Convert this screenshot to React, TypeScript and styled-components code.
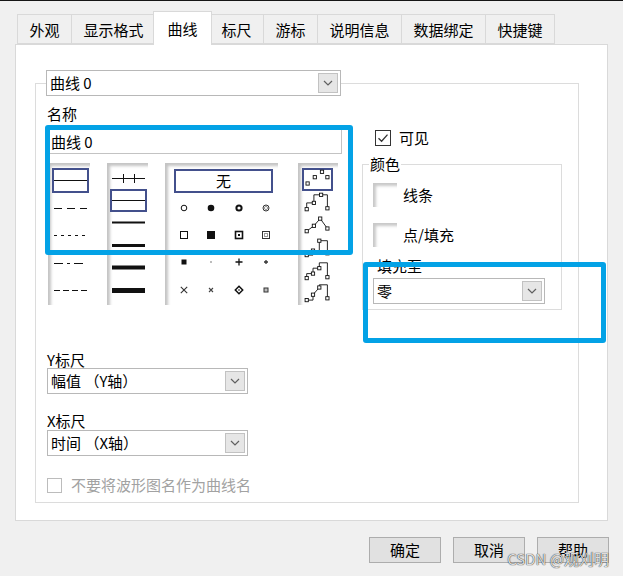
import React from 'react';
import styled, { createGlobalStyle } from 'styled-components';

const GlobalStyle = createGlobalStyle`
  html, body {
    margin: 0;
    padding: 0;
    background: #f0f0f0;
  }
  body {
    font-family: "Noto Sans CJK SC", "Noto Sans", sans-serif;
    font-size: 15px;
    color: #000;
  }
`;

const tabs = ['外观', '显示格式', '曲线', '标尺', '游标', '说明信息', '数据绑定', '快捷键'];

const Window = styled.div`
  position: relative;
  width: 623px;
  height: 576px;
  box-sizing: border-box;
  border-top: 1px solid #151515;
  background: #f0f0f0;
  display: flex;
  flex-direction: column;
  overflow: hidden;
`;

const TabBar = styled.div`
  display: flex;
  align-items: flex-end;
  height: 43px;
  padding-left: 17px;
  position: relative;
  z-index: 2;
`;

const Tab = styled.div<{ $active?: boolean }>`
  box-sizing: border-box;
  display: flex;
  align-items: center;
  height: ${(p) => (p.$active ? '34px' : '30px')};
  padding: 0 ${(p) => (p.$active ? '13.5px' : '11.5px')};
  margin: 0 ${(p) => (p.$active ? '-2px' : '0')} ${(p) => (p.$active ? '-1px' : '0')}
    ${(p) => (p.$active ? '-3px' : '-1px')};
  border: 1px solid #d9d9d9;
  border-bottom: ${(p) => (p.$active ? 'none' : '1px solid #d9d9d9')};
  background: ${(p) => (p.$active ? '#fff' : '#f0f0f0')};
  position: relative;
  z-index: ${(p) => (p.$active ? 2 : 1)};
  white-space: nowrap;
  &:first-child {
    margin-left: 0;
  }
`;

const Panel = styled.div`
  box-sizing: border-box;
  height: 477px;
  margin: 0 15px;
  padding: 25px 28px 0 19px;
  background: #fff;
  border: 1px solid #d9d9d9;
  position: relative;
  z-index: 1;
`;

const Group = styled.fieldset`
  margin: 0;
  padding: 9px 11px 6px 11px;
  border: 1px solid #dcdcdc;
  min-width: 0;
`;

const GroupLegend = styled.legend`
  padding: 0;
  margin-left: -1px;
`;

const TopArea = styled.div`
  display: grid;
  grid-template-columns: 295px 200px;
  column-gap: 20px;
  align-items: start;
`;

const Column = styled.div`
  display: flex;
  flex-direction: column;
`;

const Label = styled.div<{ $gap?: number; $indent?: number }>`
  line-height: 18px;
  height: 18px;
  margin-bottom: ${(p) => p.$gap ?? 0}px;
  margin-left: ${(p) => p.$indent ?? 0}px;
  white-space: nowrap;
`;

const NameInput = styled.div`
  box-sizing: border-box;
  height: 25px;
  display: flex;
  align-items: center;
  padding-left: 3px;
  border: 1px solid #c3c3c3;
  background: #fff;
`;

const Combo = styled.div<{ $w: number; $h?: number }>`
  box-sizing: border-box;
  width: ${(p) => p.$w}px;
  height: ${(p) => p.$h ?? 26}px;
  display: flex;
  align-items: center;
  padding: 0 2px 0 3px;
  background: #fff;
  border: 1px solid #b8b8b8;
  white-space: nowrap;
`;

const ComboText = styled.span`
  flex: 1;
  line-height: 18px;
`;

/* full-width brackets centred in their em box, as the dialog font draws them */
const Paren = styled.span`
  font-family: "Noto Sans CJK TC", "Noto Sans CJK SC", sans-serif;
`;

const ComboButton = styled.span`
  box-sizing: border-box;
  width: 20px;
  height: calc(100% - 4px);
  display: flex;
  align-items: center;
  justify-content: center;
  background: #e6e6e6;
  border: 1px solid #c2c2c2;
`;

const ListRow = styled.div`
  display: flex;
  align-items: flex-start;
  margin-top: 9px;
  height: 142px;
`;

const ListBox = styled.div<{ $w: number; $left: number; $pad: string }>`
  box-sizing: border-box;
  width: ${(p) => p.$w}px;
  height: 142px;
  margin-left: ${(p) => p.$left}px;
  padding: ${(p) => p.$pad};
  flex-shrink: 0;
  background: #fff;
  box-shadow: inset 3px 3px 3px #c4c4c4;
  display: flex;
  flex-direction: column;
`;

const ListItem = styled.div<{ $w: number; $h: number; $selected?: boolean }>`
  box-sizing: border-box;
  width: ${(p) => p.$w}px;
  height: ${(p) => p.$h}px;
  flex-shrink: 0;
  display: flex;
  align-items: center;
  justify-content: center;
  border: 2px solid ${(p) => (p.$selected ? '#43508c' : 'transparent')};
`;

const NoneBox = styled.div`
  box-sizing: border-box;
  width: 99px;
  height: 24px;
  display: flex;
  align-items: center;
  justify-content: center;
  border: 2px solid #43508c;
  line-height: 18px;
`;

const PointGrid = styled.div`
  display: grid;
  grid-template-columns: repeat(4, 27.5px);
  grid-auto-rows: 27.3px;
  margin: 1px 0 0 -4px;
  & > span {
    display: flex;
    align-items: center;
    justify-content: center;
  }
`;

const CheckRow = styled.label<{ $top?: number; $gap?: number; $muted?: boolean }>`
  display: flex;
  align-items: center;
  gap: ${(p) => p.$gap ?? 8}px;
  height: ${(p) => (p.$muted ? 22 : 20)}px;
  margin-top: ${(p) => p.$top ?? 0}px;
  margin-left: ${(p) => (p.$muted ? 0 : 13)}px;
  color: ${(p) => (p.$muted ? '#a2a2a2' : '#000')};
  line-height: 18px;
  white-space: nowrap;
`;

const CheckBox = styled.span<{ $muted?: boolean }>`
  box-sizing: border-box;
  width: ${(p) => (p.$muted ? 15 : 16)}px;
  height: ${(p) => (p.$muted ? 15 : 16)}px;
  border: 1px solid ${(p) => (p.$muted ? '#bcbcbc' : '#333')};
  background: #fff;
  display: flex;
  align-items: center;
  justify-content: center;
`;

const ColorGroup = styled.fieldset`
  margin: 6px 0 0 0;
  padding: 9px 10px 5px 10px;
  border: 1px solid #dcdcdc;
  min-width: 0;
`;

const ColorLegend = styled.legend`
  padding: 0 1px;
  margin-left: -4px;
  line-height: 20px;
`;

const SwatchRow = styled.div<{ $top?: number }>`
  display: flex;
  align-items: center;
  gap: 6px;
  height: 24px;
  margin-top: ${(p) => p.$top ?? 0}px;
  line-height: 18px;
`;

const Swatch = styled.span`
  box-sizing: border-box;
  width: 24px;
  height: 24px;
  background: #fff;
  box-shadow: inset 3px 3px 3px #c9c9c9;
`;

const BottomArea = styled.div`
  display: flex;
  flex-direction: column;
  margin-top: 41px;
`;

const Footer = styled.div`
  display: flex;
  justify-content: flex-end;
  gap: 12px;
  margin-top: 16px;
  padding-right: 14px;
`;

const Button = styled.button`
  box-sizing: border-box;
  width: 72px;
  height: 26px;
  padding: 0;
  font: inherit;
  line-height: 18px;
  color: #000;
  background: #e1e1e1;
  border: 1px solid #adadad;
`;

const Highlight = styled.div<{ $x: number; $y: number; $w: number; $h: number }>`
  position: absolute;
  left: ${(p) => p.$x}px;
  top: ${(p) => p.$y}px;
  width: ${(p) => p.$w}px;
  height: ${(p) => p.$h}px;
  box-sizing: border-box;
  border: 5px solid #03a2e6;
  border-radius: 3px;
  z-index: 5;
  pointer-events: none;
`;

const Watermark = styled.div`
  position: absolute;
  right: 14px;
  bottom: 8px;
  z-index: 6;
  font-size: 15px;
  line-height: 18px;
  color: rgba(255, 255, 255, 0.85);
  text-shadow: 0 0 1px rgba(0, 0, 0, 0.7), 0 0 1px rgba(0, 0, 0, 0.7);
  white-space: nowrap;
`;

const Chevron = () => (
  <svg width="10" height="6" viewBox="0 0 10 6">
    <path d="M1 1 L5 5 L9 1" fill="none" stroke="#606060" strokeWidth="1.2" />
  </svg>
);

const Dropdown = ({ text, w, h }: { text: React.ReactNode; w: number; h?: number }) => (
  <Combo $w={w} $h={h}>
    <ComboText>{text}</ComboText>
    <ComboButton>
      <Chevron />
    </ComboButton>
  </Combo>
);

const LineSample = ({ dash, width = 1 }: { dash?: string; width?: number }) => (
  <svg width="33" height="7" viewBox="0 0 33 7">
    <line x1="0" y1="3.5" x2="33" y2="3.5" stroke="#111" strokeWidth={width} strokeDasharray={dash} />
  </svg>
);

const CrossLine = () => (
  <svg width="33" height="11" viewBox="0 0 33 11">
    <line x1="0" y1="5.5" x2="33" y2="5.5" stroke="#111" strokeWidth="1" />
    <line x1="11.5" y1="1" x2="11.5" y2="10" stroke="#111" strokeWidth="1" />
    <line x1="22.5" y1="1" x2="22.5" y2="10" stroke="#111" strokeWidth="1" />
  </svg>
);

const pointKinds = [
  'ring', 'dot', 'boldring', 'dblring',
  'square', 'fillsq', 'dotsq', 'dblsq',
  'smallsq', 'pixel', 'plus', 'smallplus',
  'cross', 'smallcross', 'diamond', 'tinysq',
];

const PointSymbol = ({ kind }: { kind: string }) => {
  const s = '#111';
  let body: React.ReactNode = null;
  switch (kind) {
    case 'ring':
      body = <circle cx="5" cy="5" r="2.8" fill="#fff" stroke={s} strokeWidth="1" />;
      break;
    case 'dot':
      body = <circle cx="5" cy="5" r="3.3" fill={s} />;
      break;
    case 'boldring':
      body = <circle cx="5" cy="5" r="2.6" fill="#fff" stroke={s} strokeWidth="2" />;
      break;
    case 'dblring':
      body = (
        <>
          <circle cx="5" cy="5" r="3" fill="#fff" stroke="#333" strokeWidth="1" />
          <circle cx="5" cy="5" r="1.6" fill="#fff" stroke="#999" strokeWidth="1" />
        </>
      );
      break;
    case 'square':
      body = <rect x="1.5" y="1.5" width="7" height="7" fill="#fff" stroke={s} strokeWidth="1" />;
      break;
    case 'fillsq':
      body = <rect x="1" y="1" width="8" height="8" fill={s} />;
      break;
    case 'dotsq':
      body = (
        <>
          <rect x="1.5" y="1.5" width="7" height="7" fill="#fff" stroke={s} strokeWidth="1.6" />
          <rect x="4" y="4" width="2" height="2" fill={s} />
        </>
      );
      break;
    case 'dblsq':
      body = (
        <>
          <rect x="1.5" y="1.5" width="7" height="7" fill="#fff" stroke="#333" strokeWidth="1" />
          <rect x="3.5" y="3.5" width="3" height="3" fill="#fff" stroke="#999" strokeWidth="1" />
        </>
      );
      break;
    case 'smallsq':
      body = <rect x="2.5" y="2.5" width="5" height="5" fill={s} />;
      break;
    case 'pixel':
      body = <rect x="4.3" y="4.3" width="1.4" height="1.4" fill="#777" />;
      break;
    case 'plus':
      body = <path d="M1.5 5 H8.5 M5 1.5 V8.5" stroke={s} strokeWidth="1.3" />;
      break;
    case 'smallplus':
      body = <path d="M3 5 H7 M5 3 V7" stroke="#333" strokeWidth="1.3" />;
      break;
    case 'cross':
      body = <path d="M1.8 1.8 L8.2 8.2 M8.2 1.8 L1.8 8.2" stroke="#333" strokeWidth="1.1" />;
      break;
    case 'smallcross':
      body = <path d="M3 3 L7 7 M7 3 L3 7" stroke="#444" strokeWidth="1.1" />;
      break;
    case 'diamond':
      body = (
        <>
          <path d="M5 1.3 L8.7 5 L5 8.7 L1.3 5 Z" fill="#fff" stroke={s} strokeWidth="1.5" />
          <rect x="4.3" y="4.3" width="1.4" height="1.4" fill={s} />
        </>
      );
      break;
    default:
      body = <rect x="3" y="3" width="4" height="4" fill="#bbb" stroke="#333" strokeWidth="1" />;
  }
  return (
    <svg width="10" height="10" viewBox="0 0 10 10">
      {body}
    </svg>
  );
};

type Pt = [number, number];

const interpIcons: { path?: string; pts: Pt[] }[] = [
  { pts: [[4, 16], [12, 9], [20, 3], [26, 9]] },
  { path: 'M3 19 V12 H11 V3 H19 H26 V18', pts: [[3, 19], [11, 12], [19, 3], [26, 18]] },
  { path: 'M3 19 L11 13 L18 5 L26 16', pts: [[3, 19], [11, 13], [18, 5], [26, 16]] },
  { path: 'M3 20 H10 V15 H17 V4 H26 V18', pts: [[3, 20], [10, 15], [17, 4], [26, 18]] },
  { path: 'M3 20 V15 H10 V9 H17 V3 H26 V19', pts: [[3, 20], [10, 15], [17, 9], [26, 19]] },
  { path: 'M3 20 H10 V14 L17 6 V3 H26 V18', pts: [[3, 20], [10, 14], [17, 6], [26, 18]] },
];

const InterpIcon = ({ path, pts }: { path?: string; pts: Pt[] }) => (
  <svg width="30" height="22" viewBox="0 0 30 22">
    {path && <path d={path} fill="none" stroke="#111" strokeWidth="1" />}
    {pts.map(([x, y], i) => (
      <rect key={i} x={x - 1.8} y={y - 1.8} width="3.6" height="3.6" fill="#fff" stroke="#111" strokeWidth="1" />
    ))}
  </svg>
);

const CheckMark = () => (
  <svg width="12" height="12" viewBox="0 0 12 12">
    <path d="M1.5 6.2 L4.6 9.2 L10.5 2.6" fill="none" stroke="#333" strokeWidth="1.3" />
  </svg>
);

const lineDashes = [undefined, '8 5', '3 4', '9 4 3 4', '6 3'];
const lineWidths = [1, 2, 3, 4, 5];

const App = () => {
  return (
    <>
      <GlobalStyle />
      <Window>
        <TabBar>
          {tabs.map((t) => (
            <Tab key={t} $active={t === '曲线'}>
              {t}
            </Tab>
          ))}
        </TabBar>

        <Panel>
          <Group>
            <GroupLegend>
              <Dropdown text="曲线 0" w={295} />
            </GroupLegend>

            <TopArea>
              <Column>
                <Label $gap={6}>名称</Label>
                <NameInput>曲线 0</NameInput>
                <ListRow>
                  <ListBox $w={42} $left={1} $pad="5px 0 0 4px">
                    {lineDashes.map((d, i) => (
                      <ListItem key={i} $w={37} $h={25} $selected={i === 0} style={{ marginBottom: 2.5 }}>
                        <LineSample dash={d} />
                      </ListItem>
                    ))}
                  </ListBox>

                  <ListBox $w={41} $left={17} $pad="4px 0 0 3px">
                    <ListItem $w={37} $h={22.4}>
                      <CrossLine />
                    </ListItem>
                    {lineWidths.map((w, i) => (
                      <ListItem key={w} $w={37} $h={22.4} $selected={i === 0}>
                        <LineSample width={w} />
                      </ListItem>
                    ))}
                  </ListBox>

                  <ListBox $w={113} $left={17} $pad="6px 0 0 9px">
                    <NoneBox>无</NoneBox>
                    <PointGrid>
                      {pointKinds.map((k) => (
                        <span key={k}>
                          <PointSymbol kind={k} />
                        </span>
                      ))}
                    </PointGrid>
                  </ListBox>

                  <ListBox $w={40} $left={20} $pad="5px 0 0 4px">
                    {interpIcons.map((ic, i) => (
                      <ListItem key={i} $w={31} $h={22.6} $selected={i === 0}>
                        <InterpIcon path={ic.path} pts={ic.pts} />
                      </ListItem>
                    ))}
                  </ListBox>
                </ListRow>
              </Column>

              <Column>
                <CheckRow $top={23}>
                  <CheckBox>
                    <CheckMark />
                  </CheckBox>
                  可见
                </CheckRow>
                <ColorGroup>
                  <ColorLegend>颜色</ColorLegend>
                  <SwatchRow>
                    <Swatch />
                    线条
                  </SwatchRow>
                  <SwatchRow $top={16}>
                    <Swatch />
                    点/填充
                  </SwatchRow>
                  <Label $indent={4} style={{ marginTop: 10, marginBottom: 3 }}>
                    填充至
                  </Label>
                  <Dropdown text="零" w={172} />
                </ColorGroup>
              </Column>
            </TopArea>

            <BottomArea>
              <Label $gap={-1}>Y标尺</Label>
              <Dropdown
                w={201}
                text={
                  <>
                    幅值 <Paren>（</Paren>Y轴<Paren>）</Paren>
                  </>
                }
              />
              <Label style={{ marginTop: 18 }}>X标尺</Label>
              <Dropdown
                w={201}
                text={
                  <>
                    时间 <Paren>（</Paren>X轴<Paren>）</Paren>
                  </>
                }
              />
              <CheckRow $top={18} $muted $gap={9}>
                <CheckBox $muted />
                不要将波形图名作为曲线名
              </CheckRow>
            </BottomArea>
          </Group>
        </Panel>

        <Footer>
          <Button>确定</Button>
          <Button>取消</Button>
          <Button>帮助</Button>
        </Footer>

        <Highlight $x={45} $y={124} $w={308} $h={130} />
        <Highlight $x={363} $y={261} $w={243} $h={81} />
        <Watermark>CSDN @观刈明</Watermark>
      </Window>
    </>
  );
};

export default App;
